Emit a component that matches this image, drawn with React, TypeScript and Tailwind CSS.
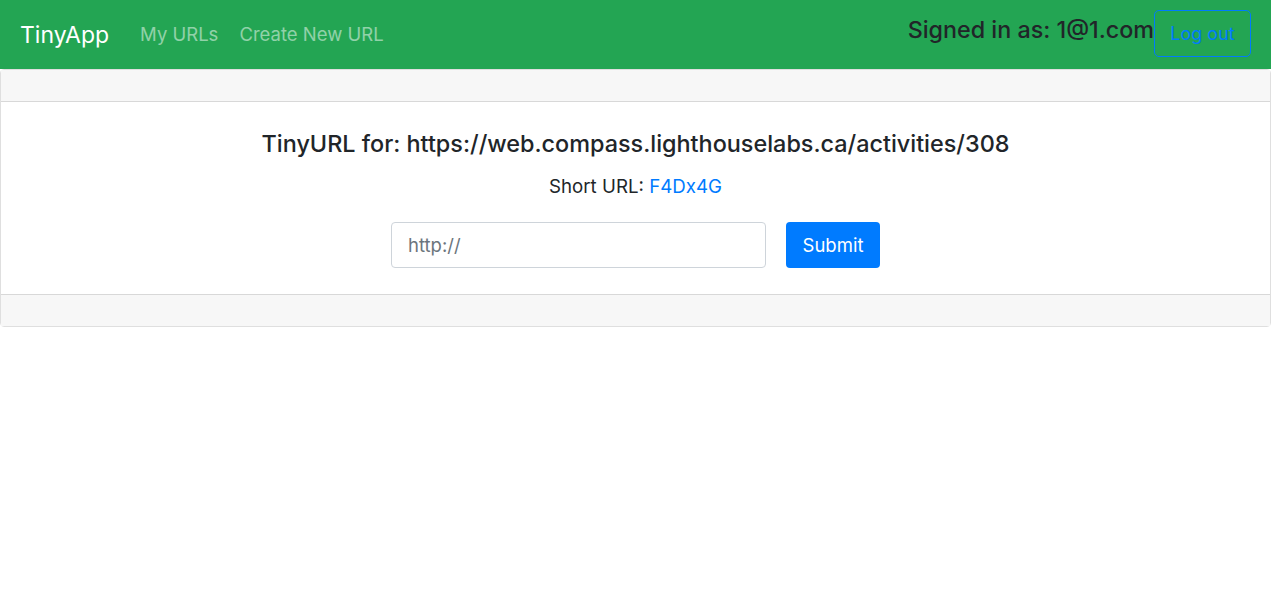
import React from "react";

export default function App() {
  return (
    <div className="min-h-[614px] bg-white text-[#212529]" style={{ fontFamily: "Inter, 'Liberation Sans', sans-serif" }}>
      <nav className="h-[69px] bg-[#23a553] flex items-center pl-[20px] pr-[20px]">
        <span className="text-[23px] leading-[32px] text-white mr-[31px]">TinyApp</span>
        <div className="flex gap-[21px] text-[18.5px] leading-[28px] text-white/50 -mt-[2px]">
          <span>My URLs</span>
          <span>Create New URL</span>
        </div>
        <div className="ml-auto flex items-start h-full pt-[10px]">
          <span className="text-[23.3px] leading-[28px] font-medium text-[#212529] mt-[6px]">Signed in as: 1@1.com</span>
          <button className="h-[47px] w-[97px] border border-[#007bff] rounded-[5px] text-[#007bff] text-[18px]">Log out</button>
        </div>
      </nav>
      <div className="border border-black/[0.125] rounded-[4px]">
        <div className="h-[32px] bg-[#f7f7f7] border-b border-black/[0.125]" />
        <div className="flex flex-col items-center h-[192px] pt-[26px]">
          <h5 className="text-[23.4px] leading-[32px] font-medium">TinyURL for: https://web.compass.lighthouselabs.ca/activities/308</h5>
          <p className="text-[18.7px] leading-[24px] mt-[15px]">Short URL: <span className="text-[#007bff]">F4Dx4G</span></p>
          <div className="flex gap-[20px] mt-[23px]">
            <input className="w-[375px] h-[46px] border border-[#ced4da] rounded-[4px] px-[16px] text-[18.5px] placeholder:text-[#6c757d] outline-none" placeholder="http://" />
            <button className="w-[94px] h-[46px] bg-[#007bff] text-white rounded-[4px] text-[18.5px] pt-[1px]">Submit</button>
          </div>
        </div>
        <div className="h-[32px] bg-[#f7f7f7] border-t border-black/[0.125]" />
      </div>
    </div>
  );
}
